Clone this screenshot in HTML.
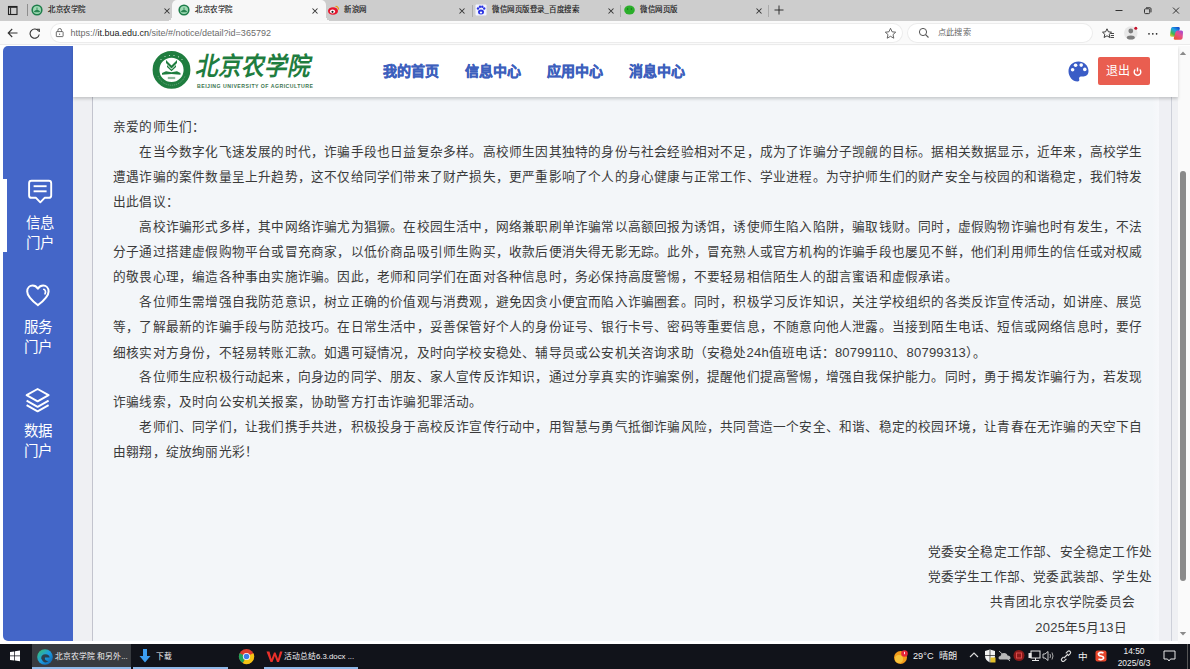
<!DOCTYPE html>
<html lang="zh-CN"><head><meta charset="utf-8">
<style>
*{margin:0;padding:0;box-sizing:border-box}
html,body{width:1190px;height:669px;overflow:hidden;background:#fff;font-family:"Liberation Sans",sans-serif;position:relative}
.a{position:absolute}
#tabbar{left:0;top:0;width:1190px;height:21px;background:#cdcdcd}
.tab{top:0;height:20px;font-size:8.6px;color:#222;line-height:20px;white-space:nowrap}
.tabt{position:absolute;top:0;line-height:19.5px;font-size:7.45px;letter-spacing:0.5px;color:#1a1a1a;white-space:nowrap;-webkit-text-stroke:0.15px #1a1a1a}
.x{position:absolute;top:0;font-size:8px;line-height:21px;color:#333}
.sep{top:5px;width:1px;height:11px;background:#9a9a9a}
#addr{left:0;top:21px;width:1190px;height:24px;background:#fafafa;border-bottom:1px solid #ebebeb}
#url{left:51px;top:23.5px;width:851px;height:18px;background:#fff;border-radius:10px;box-shadow:0 0 0 1px #ececec}
#urltxt{left:70.5px;top:23.5px;line-height:18px;font-size:9px;color:#6b6b6b;white-space:nowrap}
#urltxt b{font-weight:normal;color:#1b1b1b}
#search{left:908px;top:23.5px;width:184px;height:18px;background:#fff;border-radius:10px;box-shadow:0 0 0 1px #ececec}
#page{left:0;top:45px;width:1190px;height:599px;background:#fff}
#side{left:3px;top:46px;width:70px;height:595px;background:#4466c8;border-radius:5px 0 0 5px}
#hdr{left:73px;top:46px;width:1105px;height:51px;background:#fff;box-shadow:0 2px 3px rgba(0,0,0,.18);z-index:3}
#bgl{left:73px;top:97px;width:20px;height:544px;background:#eff0f3}
#content{left:92px;top:97px;width:1080px;height:544px;background:#f3f6f9;border-left:1px solid #c2c4ce;border-right:1px solid #cdd0d9}
#bgr{left:1172px;top:97px;width:6px;height:544px;background:#eff0f3}
#sb{left:1178px;top:46px;width:12px;height:598px;background:#fafafa}
#thumb{left:1180px;top:171px;width:6px;height:410px;background:#8a8a8a;border-radius:3px}
.txt{left:113px;font-size:12.7px;letter-spacing:0.2px;color:#3a3a3a;margin-top:1.5px;white-space:nowrap;line-height:25px}
#task{left:0;top:644px;width:1190px;height:25px;background:#11131a}
.sig{font-size:12.7px;letter-spacing:0.2px;color:#3a3a3a;margin-top:1.5px;white-space:nowrap;line-height:25px}
.logo{z-index:4;left:197px;top:51.5px;font-size:22.5px;font-weight:bold;color:#1f7d3f;letter-spacing:0px;line-height:30px;white-space:nowrap;transform:skewX(-12deg) scaleY(1.12)}
.logoen{z-index:4;left:197px;top:82.8px;font-size:5.2px;font-weight:bold;color:#3d7550;letter-spacing:0.48px;line-height:7px;white-space:nowrap}
#logout{z-index:4;left:1098px;top:57px;width:52px;height:28px;background:#e95e50;border-radius:2px;color:#fff;font-size:12px;line-height:29px;padding-left:8px;letter-spacing:0.4px}
.stxt{left:25.5px;font-size:14.5px;color:#fff;line-height:20px;white-space:nowrap;letter-spacing:0.3px}
.ttxt{top:644px;line-height:25px;font-size:7.8px;color:#f2f2f2;white-space:nowrap}
.dg{font-size:13px}
.nav{z-index:4;top:60px;font-size:14px;font-weight:bold;color:#3d60bd;-webkit-text-stroke:0.4px #3d60bd;line-height:22px;white-space:nowrap}
</style></head><body>
<!-- TAB BAR -->
<div id="tabbar" class="a"></div>
<div class="a" style="left:172px;top:0;width:154px;height:21px;background:#f7f7f7;border-radius:5px 5px 0 0"></div>
<div class="a" style="left:167px;top:16px;width:5px;height:5px;background:radial-gradient(circle at 0 0,#cdcdcd 5px,#f7f7f7 5px)"></div>
<div class="a" style="left:326px;top:16px;width:5px;height:5px;background:radial-gradient(circle at 100% 0,#cdcdcd 5px,#f7f7f7 5px)"></div>
<svg class="a" style="left:7px;top:5px" width="12" height="11" viewBox="0 0 12 11"><rect x="1.5" y="1.5" width="8.5" height="8" fill="none" stroke="#222" stroke-width="1.1"/><rect x="1.5" y="1.2" width="8.5" height="1.6" fill="#222"/><line x1="3.6" y1="2.5" x2="3.6" y2="9.5" stroke="#222" stroke-width="1"/></svg>
<div class="a" style="left:27px;top:4px;width:1px;height:12px;background:#8e8e8e"></div>
<svg class="a" style="left:31px;top:4px" width="12" height="12" viewBox="0 0 12 12"><circle cx="6" cy="6" r="4.8" fill="#9ed9b3" stroke="#1e7d4a" stroke-width="1.6"/><path d="M3.5 7.2 Q6 5.5 8.5 7.2 L8.5 7.8 L3.5 7.8Z M6 3.5 L6 6.5" fill="#1e7d4a" stroke="#1e7d4a" stroke-width="0.8"/></svg>
<div class="a tabt" style="left:48px">北京农学院</div>
<svg class="a" style="left:163.5px;top:7.5px" width="6" height="6" viewBox="0 0 6 6"><path d="M0.5 0.5 L5.5 5.5 M5.5 0.5 L0.5 5.5" stroke="#333" stroke-width="1.05"/></svg>
<svg class="a" style="left:178px;top:4px" width="12" height="12" viewBox="0 0 12 12"><circle cx="6" cy="6" r="4.8" fill="#9ed9b3" stroke="#1e7d4a" stroke-width="1.6"/><path d="M3.5 7.2 Q6 5.5 8.5 7.2 L8.5 7.8 L3.5 7.8Z M6 3.5 L6 6.5" fill="#1e7d4a" stroke="#1e7d4a" stroke-width="0.8"/></svg>
<div class="a tabt" style="left:195px">北京农学院</div>
<svg class="a" style="left:311.6px;top:7.5px" width="6" height="6" viewBox="0 0 6 6"><path d="M0.5 0.5 L5.5 5.5 M5.5 0.5 L0.5 5.5" stroke="#333" stroke-width="1.05"/></svg>
<svg class="a" style="left:327px;top:4px" width="13" height="12" viewBox="0 0 13 12"><ellipse cx="6" cy="7" rx="5" ry="3.8" fill="#e6162d"/><ellipse cx="5.5" cy="7.5" rx="2.6" ry="2" fill="#fff"/><circle cx="5.5" cy="7.8" r="1.1" fill="#222"/><path d="M8.5 2.2 Q11.5 2.5 11.6 5.5" fill="none" stroke="#f39800" stroke-width="1.1"/></svg>
<div class="a tabt" style="left:344px">新浪网</div>
<svg class="a" style="left:459.4px;top:7.5px" width="6" height="6" viewBox="0 0 6 6"><path d="M0.5 0.5 L5.5 5.5 M5.5 0.5 L0.5 5.5" stroke="#333" stroke-width="1.05"/></svg>
<div class="a" style="left:471.5px;top:5px;width:1px;height:12px;background:#ababab"></div>
<svg class="a" style="left:475px;top:4px" width="12" height="12" viewBox="0 0 12 12"><rect x="0.5" y="0.5" width="11" height="11" rx="1" fill="#f1f3ff"/><ellipse cx="6" cy="8" rx="3" ry="2.5" fill="#2932e1"/><circle cx="3" cy="4.5" r="1.2" fill="#2932e1"/><circle cx="5" cy="2.8" r="1.2" fill="#2932e1"/><circle cx="7.3" cy="2.8" r="1.2" fill="#2932e1"/><circle cx="9.2" cy="4.5" r="1.2" fill="#2932e1"/><ellipse cx="6" cy="8.5" rx="1.2" ry="1" fill="#fff"/></svg>
<div class="a tabt" style="left:492px">微信网页版登录_百度搜索</div>
<svg class="a" style="left:607.6px;top:7.5px" width="6" height="6" viewBox="0 0 6 6"><path d="M0.5 0.5 L5.5 5.5 M5.5 0.5 L0.5 5.5" stroke="#333" stroke-width="1.05"/></svg>
<div class="a" style="left:619.5px;top:5px;width:1px;height:12px;background:#ababab"></div>
<svg class="a" style="left:623px;top:4px" width="13" height="12" viewBox="0 0 13 12"><ellipse cx="6.5" cy="6" rx="5.3" ry="4.6" fill="#2aae2a"/><circle cx="4.6" cy="5" r="0.7" fill="#186e18"/><circle cx="8.4" cy="5" r="0.7" fill="#186e18"/></svg>
<div class="a tabt" style="left:640px">微信网页版</div>
<svg class="a" style="left:755.7px;top:7.5px" width="6" height="6" viewBox="0 0 6 6"><path d="M0.5 0.5 L5.5 5.5 M5.5 0.5 L0.5 5.5" stroke="#333" stroke-width="1.05"/></svg>
<div class="a" style="left:768px;top:5px;width:1px;height:12px;background:#ababab"></div>
<svg class="a" style="left:774px;top:5px" width="10" height="10" viewBox="0 0 10 10"><path d="M5 0.5 V9.5 M0.5 5 H9.5" stroke="#222" stroke-width="0.9"/></svg>
<svg class="a" style="left:1113px;top:6px" width="72" height="9" viewBox="1113 6 72 9"><line x1="1115.5" y1="10.5" x2="1122.5" y2="10.5" stroke="#333" stroke-width="1"/><rect x="1144.5" y="8.8" width="5.2" height="4.8" rx="1" fill="none" stroke="#333" stroke-width="1"/><path d="M1146 7.8 H1150 Q1151 7.8 1151 8.8 V12.3" fill="none" stroke="#333" stroke-width="1"/><path d="M1173 7.6 L1179 13.6 M1179 7.6 L1173 13.6" stroke="#333" stroke-width="1"/></svg>

<!-- ADDRESS BAR -->
<div id="addr" class="a"></div>
<div id="url" class="a"></div>
<div id="urltxt" class="a">https://<b>it.bua.edu.cn</b>/site/#/notice/detail?id=365792</div>
<div id="search" class="a"></div>
<svg class="a" style="left:6px;top:27px" width="36" height="12" viewBox="6 27 36 12"><path d="M17.5 33 H8.2 M12.2 29 L8.2 33 L12.2 37" fill="none" stroke="#333" stroke-width="1.1"/><path d="M38.6 31.2 A4.6 4.6 0 1 0 39.2 34.5" fill="none" stroke="#333" stroke-width="1.1"/><path d="M36.5 29.2 L39.3 29.2 L39.3 32" fill="none" stroke="#333" stroke-width="1.1"/></svg>
<svg class="a" style="left:55px;top:28px" width="9" height="10" viewBox="55 28 9 10"><rect x="56.3" y="31.6" width="6.8" height="5" rx="0.5" fill="none" stroke="#555" stroke-width="0.85"/><path d="M57.9 31.6 V30.3 A1.8 1.8 0 0 1 61.5 30.3 V31.6" fill="none" stroke="#555" stroke-width="0.85"/><circle cx="59.6" cy="34.2" r="0.6" fill="#555"/></svg>
<svg class="a" style="left:884px;top:27px" width="13" height="13" viewBox="884 27 13 13"><path d="M890.5 28.3 L892.1 31.8 L895.7 32.2 L893 34.6 L893.8 38.2 L890.5 36.3 L887.2 38.2 L888 34.6 L885.3 32.2 L888.9 31.8Z" fill="none" stroke="#555" stroke-width="0.9" stroke-linejoin="round"/></svg>
<svg class="a" style="left:918px;top:27px" width="12" height="12" viewBox="918 27 12 12"><circle cx="923" cy="32" r="3.6" fill="none" stroke="#555" stroke-width="1"/><path d="M925.6 34.6 L928.5 37.5" stroke="#555" stroke-width="1.1"/></svg>
<div class="a" style="left:938px;top:23.5px;line-height:18px;font-size:8.2px;color:#666;letter-spacing:0.2px;white-space:nowrap">点此搜索</div>
<svg class="a" style="left:1101px;top:27px" width="14" height="13" viewBox="1101 27 14 13"><path d="M1107 28.8 L1108.4 31.8 L1111.5 32.2 L1109.2 34.3 L1109.9 37.5 L1107 35.8 L1104.1 37.5 L1104.8 34.3 L1102.5 32.2 L1105.6 31.8Z" fill="none" stroke="#333" stroke-width="0.95" stroke-linejoin="round"/><path d="M1110.5 33.5 H1114 M1110.8 35.5 H1114 M1110.5 37.5 H1114" stroke="#333" stroke-width="0.9"/></svg>
<svg class="a" style="left:1123px;top:25px" width="16" height="16" viewBox="1123 25 16 16"><circle cx="1130.8" cy="33" r="6.8" fill="#e8e8e8"/><circle cx="1130.8" cy="31" r="2.4" fill="#7d7d7d"/><ellipse cx="1130.8" cy="37.6" rx="4" ry="2" fill="#7d7d7d"/><circle cx="1135.8" cy="28.3" r="1.5" fill="#c4102a"/></svg>
<svg class="a" style="left:1147px;top:32px" width="12" height="4" viewBox="1147 32 12 4"><circle cx="1149" cy="33.8" r="0.85" fill="#222"/><circle cx="1152.8" cy="33.8" r="0.85" fill="#222"/><circle cx="1156.6" cy="33.8" r="0.85" fill="#222"/></svg>
<svg class="a" style="left:1168px;top:25px" width="17" height="17" viewBox="1168 25 17 17">
<defs><linearGradient id="cp1" x1="0.8" y1="0" x2="0.1" y2="1"><stop offset="0" stop-color="#1048c8"/><stop offset="0.35" stop-color="#1fa0e8"/><stop offset="0.7" stop-color="#44b84a"/><stop offset="1" stop-color="#f2d13a"/></linearGradient>
<linearGradient id="cp2" x1="0.9" y1="0" x2="0.2" y2="1"><stop offset="0" stop-color="#a04ad8"/><stop offset="0.45" stop-color="#e8508a"/><stop offset="1" stop-color="#e8542a"/></linearGradient></defs>
<path d="M1172.5 27 H1178.5 Q1180.2 27 1179.8 28.8 L1178.2 34.5 Q1177.5 36.8 1175 36.8 H1171.5 Q1169.7 36.8 1170 35 L1171 28.8 Q1171.3 27 1172.5 27Z" fill="url(#cp1)"/>
<path d="M1177.5 30.5 H1181.3 Q1183.2 30.5 1183 32.3 L1182.6 38 Q1182.4 39.8 1180.6 39.8 H1175 Q1173.3 39.8 1173.8 38 L1175.5 32.3 Q1176 30.5 1177.5 30.5Z" fill="url(#cp2)"/>
</svg>

<!-- PAGE -->
<div id="page" class="a"></div>
<div id="side" class="a"></div>
<div class="a" style="left:3px;top:179px;width:4px;height:73px;background:#fff"></div>
<svg class="a" style="left:26px;top:177px" width="28" height="30" viewBox="26 177 28 30">
<path d="M31.5 180.8 L48.8 180.8 Q51.2 180.8 51.2 183.2 L51.2 195.4 Q51.2 197.8 48.8 197.8 L44.6 197.8 L40.3 202.3 L36 197.8 L31.5 197.8 Q29.1 197.8 29.1 195.4 L29.1 183.2 Q29.1 180.8 31.5 180.8Z" fill="none" stroke="#fff" stroke-width="1.9" stroke-linejoin="round"/>
<line x1="33.6" y1="186.2" x2="46.6" y2="186.2" stroke="#fff" stroke-width="1.9"/>
<line x1="33.6" y1="191.3" x2="46.6" y2="191.3" stroke="#fff" stroke-width="1.9"/>
</svg>
<div class="a stxt" style="top:212.5px">信息<br>门户</div>
<svg class="a" style="left:24px;top:282px" width="28" height="28" viewBox="24 282 28 28">
<path d="M37.9 305.2 C33.5 301.8 27.2 297 27.2 291.5 C27.2 288 29.7 285.6 32.6 285.6 C35 285.6 36.8 287 37.9 288.6 C39 287 40.8 285.6 43.2 285.6 C46.1 285.6 48.6 288 48.6 291.5 C48.6 297 42.3 301.8 37.9 305.2Z" fill="none" stroke="#fff" stroke-width="2" stroke-linejoin="round"/>
<path d="M43.8 289.3 C45.5 290 46 292 45 293.8" fill="none" stroke="#fff" stroke-width="1.7" stroke-linecap="round"/>
</svg>
<div class="a stxt" style="top:317px;left:23.5px">服务<br>门户</div>
<svg class="a" style="left:23px;top:386px" width="30" height="28" viewBox="23 386 30 28">
<path d="M37.6 389 L48.6 395.2 L37.6 401.4 L26.6 395.2Z" fill="none" stroke="#fff" stroke-width="1.9" stroke-linejoin="round"/>
<path d="M26.6 400.6 L37.6 406.8 L48.6 400.6" fill="none" stroke="#fff" stroke-width="1.9" stroke-linejoin="round"/>
<path d="M26.6 405.2 L37.6 411.4 L48.6 405.2" fill="none" stroke="#fff" stroke-width="1.9" stroke-linejoin="round"/>
</svg>
<div class="a stxt" style="top:421px;left:23.5px">数据<br>门户</div>
<div id="bgl" class="a"></div>
<div id="content" class="a"></div>
<div id="bgr" class="a"></div>
<div class="a" style="left:1159px;top:97px;width:12px;height:544px;background:#eff0f4"></div>
<div class="a" style="left:1152px;top:97px;width:7px;height:544px;background:linear-gradient(90deg,#f3f6f9,#f7f8fb)"></div>
<div id="hdr" class="a"></div>
<svg class="a" style="left:148px;top:48px;z-index:4" width="48" height="46" viewBox="148 48 48 46">
<circle cx="171.5" cy="69.9" r="15.5" fill="none" stroke="#1f7d3f" stroke-width="6.8"/>
<g fill="#cfe5d6">
<circle cx="165" cy="56.5" r="0.6"/><circle cx="169.5" cy="55.5" r="0.6"/><circle cx="174" cy="55.5" r="0.6"/><circle cx="178.5" cy="56.8" r="0.6"/><circle cx="182" cy="59.5" r="0.6"/><circle cx="161" cy="59.5" r="0.6"/>
</g>
<g fill="#7fb592" opacity="0.6"><path d="M158 76 A14.5 14.5 0 0 0 185 76" fill="none" stroke="#9cc8aa" stroke-width="1" stroke-dasharray="1 1"/></g>
<path d="M166 60 L171.5 65.5 L177 60 L177 63 L171.5 68.5 L166 63Z" fill="#1f7d3f"/>
<path d="M167 65 L171.5 69.5 L176 65 L176 67 L171.5 71.3 L167 67Z" fill="#1f7d3f"/>
<path d="M162 73 L166 71.3 L171.5 72.3 L177 71.3 L180.5 73 L180.5 74.8 L171.5 74 L162 74.8Z" fill="#1f7d3f"/>
<rect x="167.8" y="76.9" width="7.4" height="2.2" fill="#8fb99c"/>
</svg>
<div class="a logo">北京农学院</div>
<div class="a logoen">BEIJING UNIVERSITY OF AGRICULTURE</div>
<svg class="a" style="left:1068px;top:61px;z-index:4" width="21" height="21" viewBox="0 0 21 21">
<path d="M10.5 0.5 C4.5 0.5 0.5 4.8 0.5 10.2 C0.5 15.5 4.6 20.5 9.5 20.5 C11.2 20.5 11.6 19.3 11.2 18.2 C10.8 17 11.3 15.4 13 15.4 L15.5 15.4 C18.5 15.4 20.5 13.3 20.5 10 C20.5 4.5 16 0.5 10.5 0.5Z" fill="#3a5cc6"/>
<circle cx="4.6" cy="8.8" r="1.8" fill="#fff"/>
<circle cx="7.6" cy="4.3" r="1.8" fill="#fff"/>
<circle cx="13.2" cy="4.1" r="1.8" fill="#fff"/>
<circle cx="16.8" cy="8.4" r="1.8" fill="#fff"/>
</svg>
<div class="a" id="logout">退出<svg width="9" height="9" viewBox="0 0 9 9" style="position:absolute;left:35px;top:10px"><path d="M2.3 2.6 A3.3 3.3 0 1 0 6.7 2.6" fill="none" stroke="#fff" stroke-width="1.4"/><line x1="4.5" y1="0.6" x2="4.5" y2="4.4" stroke="#fff" stroke-width="1.4"/></svg></div>
<div class="a nav" style="left:383px">我的首页</div>
<div class="a nav" style="left:465px">信息中心</div>
<div class="a nav" style="left:547px">应用中心</div>
<div class="a nav" style="left:629px">消息中心</div>

<div class="a txt" style="top:113px">亲爱的师生们：</div>
<div class="a txt" style="top:138px">　　在当今数字化飞速发展的时代，诈骗手段也日益复杂多样。高校师生因其独特的身份与社会经验相对不足，成为了诈骗分子觊觎的目标。据相关数据显示，近年来，高校学生</div>
<div class="a txt" style="top:163px">遭遇诈骗的案件数量呈上升趋势，这不仅给同学们带来了财产损失，更严重影响了个人的身心健康与正常工作、学业进程。为守护师生们的财产安全与校园的和谐稳定，我们特发</div>
<div class="a txt" style="top:188px">出此倡议：</div>
<div class="a txt" style="top:213px">　　高校诈骗形式多样，其中网络诈骗尤为猖獗。在校园生活中，网络兼职刷单诈骗常以高额回报为诱饵，诱使师生陷入陷阱，骗取钱财。同时，虚假购物诈骗也时有发生，不法</div>
<div class="a txt" style="top:238px">分子通过搭建虚假购物平台或冒充商家，以低价商品吸引师生购买，收款后便消失得无影无踪。此外，冒充熟人或官方机构的诈骗手段也屡见不鲜，他们利用师生的信任或对权威</div>
<div class="a txt" style="top:263px">的敬畏心理，编造各种事由实施诈骗。因此，老师和同学们在面对各种信息时，务必保持高度警惕，不要轻易相信陌生人的甜言蜜语和虚假承诺。</div>
<div class="a txt" style="top:288px">　　各位师生需增强自我防范意识，树立正确的价值观与消费观，避免因贪小便宜而陷入诈骗圈套。同时，积极学习反诈知识，关注学校组织的各类反诈宣传活动，如讲座、展览</div>
<div class="a txt" style="top:313px">等，了解最新的诈骗手段与防范技巧。在日常生活中，妥善保管好个人的身份证号、银行卡号、密码等重要信息，不随意向他人泄露。当接到陌生电话、短信或网络信息时，要仔</div>
<div class="a txt" style="top:338px">细核实对方身份，不轻易转账汇款。如遇可疑情况，及时向学校安稳处、辅导员或公安机关咨询求助（安稳处<span class="dg">24h</span>值班电话：<span class="dg">80799110</span>、<span class="dg">80799313</span>）。</div>
<div class="a txt" style="top:363px">　　各位师生应积极行动起来，向身边的同学、朋友、家人宣传反诈知识，通过分享真实的诈骗案例，提醒他们提高警惕，增强自我保护能力。同时，勇于揭发诈骗行为，若发现</div>
<div class="a txt" style="top:388px">诈骗线索，及时向公安机关报案，协助警方打击诈骗犯罪活动。</div>
<div class="a txt" style="top:413px">　　老师们、同学们，让我们携手共进，积极投身于高校反诈宣传行动中，用智慧与勇气抵御诈骗风险，共同营造一个安全、和谐、稳定的校园环境，让青春在无诈骗的天空下自</div>
<div class="a txt" style="top:438px">由翱翔，绽放绚丽光彩！</div>


<div class="a sig" style="top:538px;right:38px">党委安全稳定工作部、安全稳定工作处</div>
<div class="a sig" style="top:563px;right:38px">党委学生工作部、党委武装部、学生处</div>
<div class="a sig" style="top:588px;right:55px">共青团北京农学院委员会</div>
<div class="a sig" style="top:613px;right:63px"><span class="dg">2025</span>年<span class="dg">5</span>月<span class="dg">13</span>日</div>
<div id="sb" class="a"></div>
<div id="thumb" class="a"></div>
<svg class="a" style="left:1179px;top:50px" width="8" height="6" viewBox="0 0 8 6"><path d="M0.8 5 L4 1.5 L7.2 5Z" fill="#8a8a8a"/></svg>
<svg class="a" style="left:1179px;top:631px" width="8" height="6" viewBox="0 0 8 6"><path d="M0.8 1 L4 4.5 L7.2 1Z" fill="#8a8a8a"/></svg>

<!-- TASKBAR -->
<div id="task" class="a"></div>
<svg class="a" style="left:9px;top:650px" width="12" height="12" viewBox="0 0 12 12"><path d="M1 2 L5.3 1.4 V5.5 H1Z M6 1.3 L11 0.6 V5.5 H6Z M1 6.3 H5.3 V10.5 L1 9.9Z M6 6.3 H11 V11.2 L6 10.6Z" fill="#fff"/></svg>
<div class="a" style="left:32px;top:644px;width:99px;height:25px;background:#383b40"></div>
<div class="a" style="left:32px;top:667px;width:99px;height:2px;background:#8fb8e8"></div>
<svg class="a" style="left:36px;top:648px" width="18" height="18" viewBox="0 0 18 18"><defs><linearGradient id="eg" x1="0" y1="0" x2="1" y2="1"><stop offset="0" stop-color="#3ec35f"/><stop offset="0.5" stop-color="#1b9de2"/><stop offset="1" stop-color="#0c59a4"/></linearGradient></defs><circle cx="9" cy="9" r="7.8" fill="url(#eg)"/><path d="M5.2 10.5 Q5 6.5 9.5 6.3 Q13.5 6.5 13.6 9.5 L9 9.5 Q8.2 12.8 12.5 13.3 Q8 16.5 5.2 10.5Z" fill="#2e3036" opacity="0.85"/></svg>
<div class="a ttxt" style="left:55px">北京农学院 和另外...</div>
<div class="a" style="left:133px;top:667px;width:95px;height:2px;background:#8fb8e8"></div>
<svg class="a" style="left:138px;top:648px" width="14" height="16" viewBox="0 0 14 16"><path d="M5 1 H9 V8 H12.5 L7 14.5 L1.5 8 H5Z" fill="#3c9df0"/></svg>
<div class="a ttxt" style="left:155.5px">下载</div>
<svg class="a" style="left:238px;top:648px" width="17" height="17" viewBox="0 0 17 17"><circle cx="8.5" cy="8.5" r="7.6" fill="#db3b2e"/><path d="M8.5 8.5 L15.4 5.3 A7.6 7.6 0 0 1 4.7 15.1Z" fill="#f3c313"/><path d="M8.5 8.5 L4.7 15.1 A7.6 7.6 0 0 1 1.6 5.3Z" fill="#1ea35a"/><circle cx="8.5" cy="8.5" r="3.6" fill="#fff"/><circle cx="8.5" cy="8.5" r="2.8" fill="#3b7ce8"/></svg>
<div class="a" style="left:264px;top:667px;width:94px;height:2px;background:#8fb8e8"></div>
<svg class="a" style="left:266px;top:650px" width="17" height="13" viewBox="0 0 17 13"><path d="M0.5 1.5 H3.5 L5.5 9 L8 2.5 H9.5 L12 9 L14 1.5 H16.5 L13 12 H11 L8.8 6 L6.5 12 H4.5Z" fill="#e8302a"/></svg>
<div class="a ttxt" style="left:284px">活动总结6.3.docx ...</div>
<svg class="a" style="left:893px;top:649px" width="16" height="16" viewBox="0 0 16 16"><circle cx="7.5" cy="8.5" r="6.5" fill="#f39a1a"/><circle cx="6" cy="10" r="4" fill="#f7c23a"/><circle cx="11.5" cy="4.5" r="3.3" fill="#e8263a"/><path d="M11.5 2.8 V5.2" stroke="#fff" stroke-width="0.9"/></svg>
<div class="a ttxt" style="left:913px;font-size:9.2px">29°C&nbsp; 晴朗</div>
<svg class="a" style="left:969px;top:651px" width="10" height="8" viewBox="0 0 10 8"><path d="M1 6 L5 2 L9 6" fill="none" stroke="#ddd" stroke-width="1.1"/></svg>
<svg class="a" style="left:984px;top:649px" width="12" height="14" viewBox="0 0 12 14"><path d="M1 2 L6 0.5 L11 2 V7 Q11 11 6 13.5 Q1 11 1 7Z" fill="#f2f2f2"/><path d="M6 0.5 V13.5 M1 6.5 H11" stroke="#333" stroke-width="0.8"/><rect x="6.5" y="8.5" width="5" height="5" fill="#e2c02a"/></svg>
<svg class="a" style="left:998px;top:650px" width="13" height="12" viewBox="0 0 13 12"><path d="M2 9.5 Q0.5 9.5 0.5 7.8 Q0.5 6 2.5 6 Q3 3 6 3 Q9 3 9.5 5.5 Q12.5 5.5 12.5 8 Q12.5 9.5 11 9.5Z" fill="#b8b8b8"/><path d="M1 1 L12 11" stroke="#b8b8b8" stroke-width="1"/></svg>
<svg class="a" style="left:1013px;top:649px" width="12" height="13" viewBox="0 0 12 13"><circle cx="6" cy="6.5" r="5.5" fill="#8a1a1a"/><rect x="3.5" y="4" width="5" height="5" fill="none" stroke="#e35050" stroke-width="0.9"/></svg>
<svg class="a" style="left:1028px;top:650px" width="13" height="12" viewBox="0 0 13 12"><rect x="3" y="1" width="9" height="7" fill="none" stroke="#e8e8e8" stroke-width="1"/><rect x="0.5" y="3" width="3" height="5" fill="#e8e8e8"/><path d="M4 10.5 H11 M7.5 8 V10.5" stroke="#e8e8e8" stroke-width="1"/></svg>
<svg class="a" style="left:1042px;top:650px" width="13" height="12" viewBox="0 0 13 12"><path d="M1 4 H3 L6 1.5 V10.5 L3 8 H1Z" fill="none" stroke="#ddd" stroke-width="0.9"/><path d="M8 4 Q9 6 8 8 M10 2.5 Q12 6 10 9.5" fill="none" stroke="#bbb" stroke-width="0.9"/></svg>
<svg class="a" style="left:1060px;top:650px" width="12" height="12" viewBox="0 0 12 12"><path d="M3.5 7 L1.8 8.7 Q0.8 10 2 11 Q3.2 12 4.4 10.8 L6.4 8.8 M5.8 3.4 L7.7 1.4 Q9 0.3 10.2 1.5 Q11.2 2.7 10 3.9 L8 5.9 M4 8 L8 4" fill="none" stroke="#ddd" stroke-width="1.1"/></svg>
<div class="a ttxt" style="left:1078px;font-size:9.6px">中</div>
<svg class="a" style="left:1095px;top:650px" width="12" height="12" viewBox="0 0 12 12"><rect x="0.5" y="0.5" width="11" height="11" rx="2" fill="#e8452a"/><path d="M8.5 3 Q5.5 1.5 3.5 3.5 Q3 5.5 6 6 Q9 6.5 8.5 8.5 Q6.5 10.5 3.5 9" fill="none" stroke="#fff" stroke-width="1.6"/></svg>
<div class="a" style="left:1110px;top:645px;width:48px;text-align:center;color:#f0f0f0;font-size:8.4px;line-height:12px;white-space:nowrap">14:50<br>2025/6/3</div>
<svg class="a" style="left:1163px;top:650px" width="13" height="13" viewBox="0 0 13 13"><path d="M1 1 H12 V9 H7.5 L6 11 L4.5 9 H1Z" fill="none" stroke="#e8e8e8" stroke-width="1"/></svg>
<div class="a" style="left:1187px;top:644px;width:1px;height:25px;background:#555"></div>
</body></html>
